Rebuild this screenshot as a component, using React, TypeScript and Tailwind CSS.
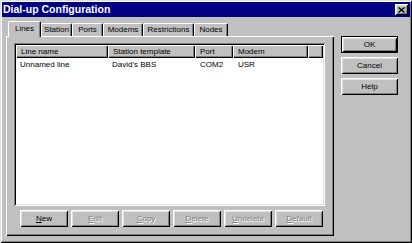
import React from "react";

const raised =
  "shadow-[inset_1px_1px_0_#fff,inset_-1px_-1px_0_#000,inset_2px_2px_0_#dfdfdf,inset_-2px_-2px_0_#808080]";

function Btn({
  label,
  ul,
  disabled,
  w = "w-[48px]",
}: {
  label: string;
  ul?: number;
  disabled?: boolean;
  w?: string;
}) {
  const parts =
    ul === undefined ? (
      label
    ) : (
      <>
        {label.slice(0, ul)}
        <span className="underline underline-offset-[1px]">{label[ul]}</span>
        {label.slice(ul + 1)}
      </>
    );
  return (
    <div
      className={`${w} h-[17px] bg-[#c0c0c0] ${raised} flex items-center justify-center text-[8px] leading-none ${
        disabled ? "text-[#808080] [text-shadow:1px_1px_0_#fff]" : "text-black"
      }`}
    >
      {parts}
    </div>
  );
}

function Tab({ label, w, selected }: { label: string; w: string; selected?: boolean }) {
  return (
    <div
      className={`${w} ${
        selected ? "h-[16px] mb-[-1px] z-10" : "h-[13px]"
      } relative bg-[#c0c0c0] border-l border-t border-white border-r border-r-black rounded-tl-[2px] rounded-tr-[2px] shadow-[inset_-1px_0_0_#808080] flex items-center justify-center text-[8px] leading-none text-black`}
    >
      <span className={selected ? "-mt-[2px]" : ""}>{label}</span>
    </div>
  );
}

function Head({ label, w }: { label: string; w: string }) {
  return (
    <div
      className={`${w} h-[13px] bg-[#c0c0c0] shadow-[inset_1px_1px_0_#fff,inset_-1px_-1px_0_#000,inset_-2px_-2px_0_#808080] flex items-center pl-[5px] text-[8px] leading-none text-black whitespace-nowrap`}
    >
      {label}
    </div>
  );
}

export default function App() {
  return (
    <div
      className="w-[412px] h-[243px] bg-[#c0c0c0] p-[2px] shadow-[inset_1px_1px_0_#dfdfdf,inset_-1px_-1px_0_#000,inset_2px_2px_0_#fff,inset_-2px_-2px_0_#808080] flex flex-col overflow-hidden"
      style={{ fontFamily: '"Liberation Sans", Arial, sans-serif' }}
    >
      <div className="h-[15px] bg-[#000080] flex items-center justify-between pl-[1px] pr-[2px]">
        <span className="text-white font-bold text-[10.5px] leading-none">Dial-up Configuration</span>
        <div className={`w-[13px] h-[11px] bg-[#c0c0c0] ${raised} flex items-center justify-center`}>
          <svg width="7" height="6" viewBox="0 0 7 6">
            <path d="M0.5 0.5 L6.5 5.5 M6.5 0.5 L0.5 5.5" stroke="#000" strokeWidth="1.4" />
          </svg>
        </div>
      </div>
      <div className="flex pl-[4px] pt-[4px]">
        <div className="w-[328px] flex flex-col">
          <div className="h-[15px] flex items-end pl-[2px]">
            <Tab label="Lines" w="w-[33px]" selected />
            <Tab label="Station" w="w-[31px]" />
            <Tab label="Ports" w="w-[31px]" />
            <Tab label="Modems" w="w-[40px]" />
            <Tab label="Restrictions" w="w-[51px]" />
            <Tab label="Nodes" w="w-[34px]" />
          </div>
          <div className="h-[200px] bg-[#c0c0c0] shadow-[inset_1px_1px_0_#fff,inset_-1px_-1px_0_#000,inset_-2px_-2px_0_#808080] pt-[7px] pl-[8px] flex flex-col">
            <div className="w-[311px] h-[163px] bg-white p-[2px] shadow-[inset_1px_1px_0_#808080,inset_-1px_-1px_0_#fff,inset_2px_2px_0_#000,inset_-2px_-2px_0_#dfdfdf]">
              <div className="flex">
                <Head label="Line name" w="w-[92px]" />
                <Head label="Station template" w="w-[87px]" />
                <Head label="Port" w="w-[38px]" />
                <Head label="Modem" w="w-[75px]" />
                <Head label="" w="flex-1" />
              </div>
              <div className="flex h-[13px] items-center text-[8px] leading-none text-black whitespace-nowrap">
                <div className="w-[92px] pl-[4px]">Unnamed line</div>
                <div className="w-[87px] pl-[4px]">David's BBS</div>
                <div className="w-[38px] pl-[5px]">COM2</div>
                <div className="w-[75px] pl-[5px]">USR</div>
              </div>
            </div>
            <div className="flex gap-[3px] pl-[6px] mt-[4px]">
              <Btn label="New" ul={0} />
              <Btn label="Edit" ul={0} disabled />
              <Btn label="Copy" ul={0} disabled />
              <Btn label="Delete" ul={0} disabled />
              <Btn label="Undelete" ul={0} disabled />
              <Btn label="Default" ul={0} disabled />
            </div>
          </div>
        </div>
        <div className="ml-[7px] mt-[15px] flex flex-col gap-[4px]">
          <div className="w-[57px] h-[17px] border border-black">
            <div className={`w-full h-full bg-[#c0c0c0] ${raised} flex items-center justify-center text-[8px] leading-none text-black`}>
              OK
            </div>
          </div>
          <Btn label="Cancel" w="w-[57px]" />
          <Btn label="Help" w="w-[57px]" />
        </div>
      </div>
    </div>
  );
}
